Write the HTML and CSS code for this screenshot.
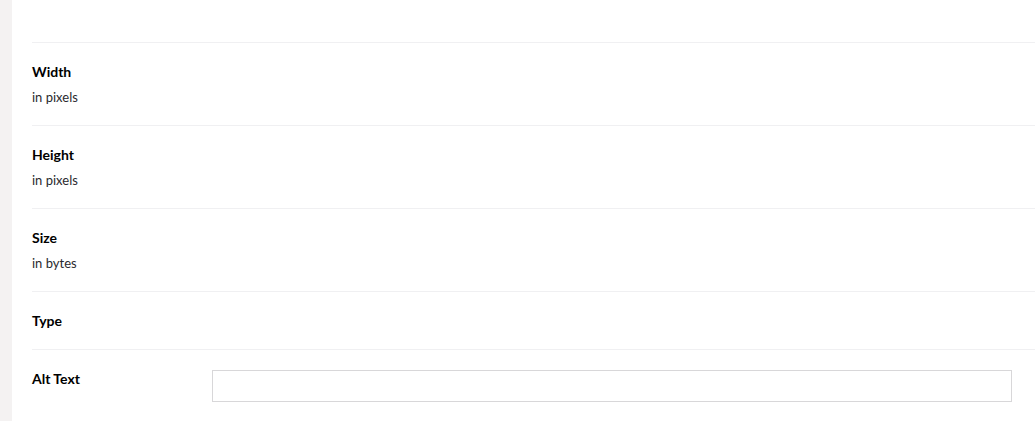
FILE: index.html
```html
<!DOCTYPE html>
<html>
<head>
<meta charset="utf-8">
<link rel="stylesheet" href="styles.css">
</head>
<body>
<div class="page">
  <aside class="strip"></aside>
  <main class="content">
    <div class="top"></div>
    <div class="row">
      <div class="labelcol">
        <div class="label">Width</div>
        <div class="desc">in pixels</div>
      </div>
      <div class="field"></div>
    </div>
    <div class="row">
      <div class="labelcol">
        <div class="label">Height</div>
        <div class="desc">in pixels</div>
      </div>
      <div class="field"></div>
    </div>
    <div class="row">
      <div class="labelcol">
        <div class="label">Size</div>
        <div class="desc">in bytes</div>
      </div>
      <div class="field"></div>
    </div>
    <div class="row">
      <div class="labelcol">
        <div class="label">Type</div>
      </div>
      <div class="field"></div>
    </div>
    <div class="row row-input">
      <div class="labelcol">
        <div class="label">Alt Text</div>
      </div>
      <div class="field"><input class="text" type="text"></div>
    </div>
  </main>
</div>
</body>
</html>
```
FILE: styles.css
```css
html, body {
  margin: 0;
  padding: 0;
  background: #fff;
  font-family: Lato, "Open Sans", sans-serif;
  overflow: hidden;
}
.page {
  display: flex;
  height: 421px;
}
.strip {
  width: 12px;
  flex: none;
  background: #f4f2f2;
}
.content {
  flex: 1;
  padding-left: 20px;
}
.top {
  height: 42px;
}
.row {
  display: flex;
  border-top: 1px solid #f0f0f2;
  padding: 19px 0 18px;
}
.labelcol {
  width: 180px;
  flex: none;
}
.label {
  font-size: 14px;
  line-height: 20px;
  font-weight: 700;
  color: #000;
}
.desc {
  margin-top: 5px;
  font-size: 13px;
  line-height: 20px;
  color: #2a2a2e;
}
.field {
  flex: 1;
}
.text {
  display: block;
  box-sizing: border-box;
  width: 800px;
  height: 32px;
  margin-top: 1px;
  border: 1px solid #d8d7d9;
  border-radius: 0;
  padding: 0 10px;
  font-family: inherit;
  font-size: 14px;
  background: #fff;
  outline: none;
}
```
